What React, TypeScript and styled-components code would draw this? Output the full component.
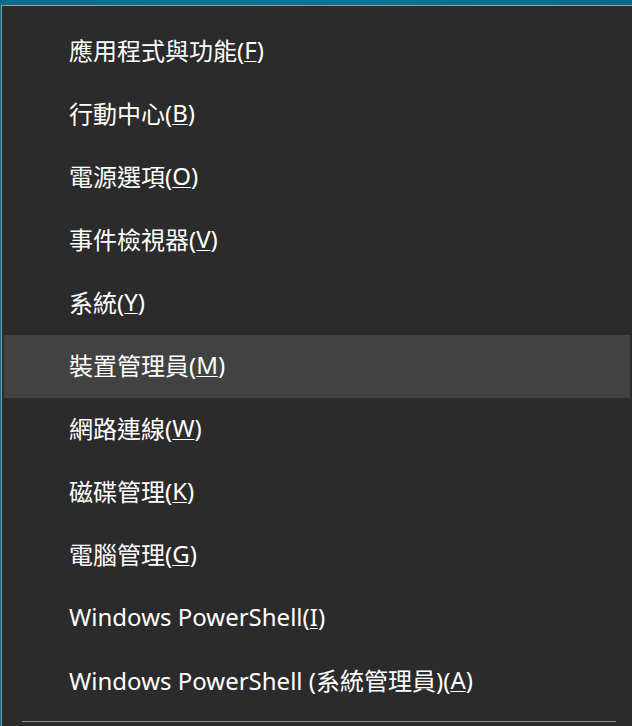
import React from 'react';
import styled, { createGlobalStyle } from 'styled-components';

const GlobalStyle = createGlobalStyle`
  html, body {
    margin: 0;
    padding: 0;
    background: #0a6d8a;
    overflow: hidden;
  }
  body {
    font-family: "Noto Sans", "Noto Sans CJK TC", sans-serif;
  }
`;

const Desktop = styled.div`
  width: 632px;
  height: 726px;
  padding: 5px 0 0 1px;
  box-sizing: border-box;
  background: linear-gradient(90deg, #0b6c8a 0%, #0a7396 50%, #086a88 100%);
  overflow: hidden;
`;

const Menu = styled.div`
  background: #2b2b2b;
  border-top: 1px solid #9c9c9c;
  border-left: 1px solid #8e9ea4;
  width: 640px;
  height: 760px;
  padding: 14px 0 0 2px;
  box-sizing: border-box;
`;

const List = styled.ul`
  list-style: none;
  margin: 0;
  padding: 0;
  width: 626px;
`;

const Item = styled.li<{ active?: boolean }>`
  height: 63px;
  box-sizing: border-box;
  display: flex;
  align-items: center;
  padding: 0 0 4px 65px;
  background: ${(p) => (p.active ? '#424242' : 'transparent')};
  color: #ffffff;
  font-size: 24px;
  white-space: nowrap;
`;

const Key = styled.span`
  text-decoration: underline;
  text-decoration-thickness: 1px;
  text-underline-offset: 2px;
`;

const Separator = styled.div`
  height: 1px;
  background: #8a8a8a;
  margin: 8px 0 0 18px;
  width: 594px;
`;

const items: { label: string; key: string; active?: boolean }[] = [
  { label: '應用程式與功能', key: 'F' },
  { label: '行動中心', key: 'B' },
  { label: '電源選項', key: 'O' },
  { label: '事件檢視器', key: 'V' },
  { label: '系統', key: 'Y' },
  { label: '裝置管理員', key: 'M', active: true },
  { label: '網路連線', key: 'W' },
  { label: '磁碟管理', key: 'K' },
  { label: '電腦管理', key: 'G' },
  { label: 'Windows PowerShell', key: 'I' },
  { label: 'Windows PowerShell (系統管理員)', key: 'A' },
];

export default function App() {
  return (
    <>
      <GlobalStyle />
      <Desktop>
        <Menu>
          <List>
            {items.map((it) => (
              <Item key={it.key} active={it.active}>
                {it.label}(<Key>{it.key}</Key>)
              </Item>
            ))}
          </List>
          <Separator />
        </Menu>
      </Desktop>
    </>
  );
}
